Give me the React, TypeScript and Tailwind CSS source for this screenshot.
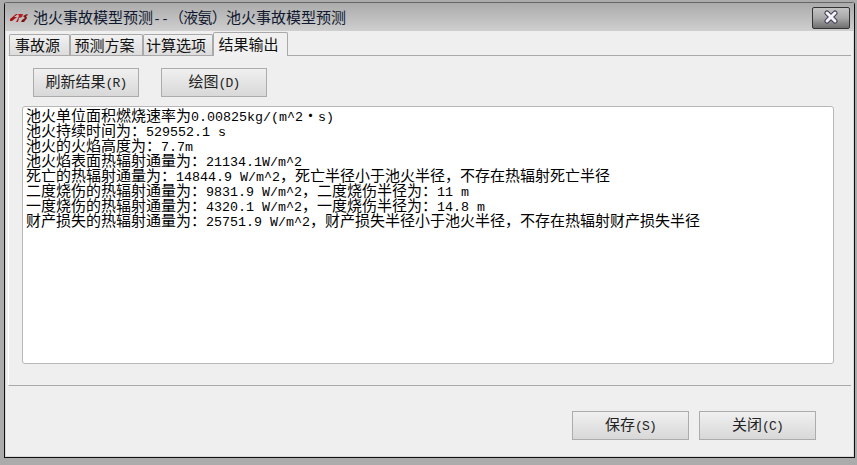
const CJK = '"Noto Sans CJK SC", "Liberation Sans", sans-serif';

const lines = [
  "池火单位面积燃烧速率为0.00825kg/(m^2·s)",
  "池火持续时间为：529552.1 s",
  "池火的火焰高度为：7.7m",
  "池火焰表面热辐射通量为：21134.1W/m^2",
  "死亡的热辐射通量为：14844.9 W/m^2，死亡半径小于池火半径，不存在热辐射死亡半径",
  "二度烧伤的热辐射通量为：9831.9 W/m^2，二度烧伤半径为：11 m",
  "一度烧伤的热辐射通量为：4320.1 W/m^2，一度烧伤半径为：14.8 m",
  "财产损失的热辐射通量为：25751.9 W/m^2，财产损失半径小于池火半径，不存在热辐射财产损失半径",
];

const tabs = [
  { label: "事故源", width: "w-[61px]" },
  { label: "预测方案", width: "w-[73px]" },
  { label: "计算选项", width: "w-[70px]" },
];

// ascii runs are half width like the bitmap font in the picture
function Mixed({ text, latin = "text-[13.33px]" }: { text: string; latin?: string }) {
  const parts = text.split(/([\x20-\x7e]+)/);
  return (
    <span>
      {parts.map((p, i) =>
        /^[\x20-\x7e]+$/.test(p) ? (
          <span key={i} className={`font-['Liberation_Mono',monospace] whitespace-pre ${latin}`}>
            {p}
          </span>
        ) : (
          <span key={i}>{p}</span>
        ),
      )}
    </span>
  );
}

function Btn({ label, className }: { label: string; className: string }) {
  return (
    <button
      className={`flex items-center justify-center border border-[#acacac] bg-gradient-to-b from-[#f0f0f0] to-[#d8d8d8] pb-[2px] text-[15px] text-[#222] ${className}`}
    >
      <Mixed text={label} latin="text-[13px] tracking-[-0.8px]" />
    </button>
  );
}

export default function App() {
  return (
    <div className="h-[465px] w-[857px] overflow-hidden bg-[#ababab] pt-[2px] pl-[4px]" style={{ fontFamily: CJK }}>
      <div className="flex h-[456px] w-[851px] flex-col rounded-t-[3px] border border-[#111] border-t-[#666] bg-[#efefef] leading-none shadow-[inset_0_0_0_1px_#d8d8d8]">
        {/* title bar */}
        <div className="flex h-[28px] shrink-0 items-center bg-gradient-to-b from-[#ababab] to-[#cfcfcf] pr-[4px] pl-[4px]">
          <svg width="19" height="10" viewBox="0 0 19 10" className="mt-[2px] mr-[5px] shrink-0">
            <path d="M1 6 L7 1 L9 1 L5 4 L8 4 L3 8 L1 8 Z" fill="#a81414" />
            <path d="M7 9 L10 3 L9 1 L14 1 L13 4 L10 5 L9 9 Z" fill="#b81c1c" />
            <path d="M13 7 L16 5 L14 3 L18 1 L19 2 L17 3 L18 5 L15 9 L12 9 Z" fill="#7e1010" />
          </svg>
          <span className="pt-[1px] text-[15px] whitespace-nowrap text-[#101830]">
            池火事故模型预测<span className="font-['Liberation_Mono',monospace] text-[13.33px]">--</span>
            <span className="tracking-[-0.75px]">（液氨）</span>池火事故模型预测
          </span>
          <div className="mt-[1px] ml-auto flex h-[22px] w-[38px] items-center justify-center rounded-[2px] border border-[#333] bg-gradient-to-b from-[#c4c4c4] via-[#a8a8a8] to-[#6f6f6f]">
            <svg width="16" height="14" viewBox="0 0 16 14" className="-mt-[2px]">
              <path d="M4 3 L12 11 M12 3 L4 11" stroke="#3f3f55" strokeWidth="5" strokeLinecap="round" fill="none" />
              <path d="M4 3 L12 11 M12 3 L4 11" stroke="#f4f4f8" strokeWidth="3" strokeLinecap="round" fill="none" />
            </svg>
          </div>
        </div>

        {/* tab strip */}
        <div className="flex h-[24px] shrink-0 items-end pl-[4px] text-[15px] text-[#111]">
          {tabs.map((t) => (
            <div
              key={t.label}
              className={`flex h-[21px] items-center justify-center rounded-t-[2px] border border-b-0 border-[#a9a9a9] bg-gradient-to-b from-[#f2f2f2] to-[#dcdcdc] pr-[4px] pb-[2px] ${t.width}`}
            >
              {t.label}
            </div>
          ))}
          <div className="relative z-10 -mb-px flex h-[24px] w-[75px] items-center justify-center rounded-t-[2px] border border-b-0 border-[#a9a9a9] bg-[#f0f0f0] pr-[4px] pb-[3px]">
            结果输出
          </div>
        </div>

        {/* tab page */}
        <div className="mx-[3px] flex h-[331px] shrink-0 flex-col border-t border-b border-l border-t-[#a9a9a9] border-b-[#a9a9a9] border-l-[#fff] bg-[#efefef] pt-[12px] pr-[16px] pl-[13px]">
          <div className="ml-[11px] flex gap-[22px]">
            <Btn label="刷新结果(R)" className="h-[29px] w-[106px]" />
            <Btn label="绘图(D)" className="h-[29px] w-[106px]" />
          </div>
          <div className="mt-[9px] h-[258px] w-[812px] rounded-[3px] border border-[#b8b8b8] bg-white pt-[1px] pl-[3px] text-[15px] text-black">
            {lines.map((l) => (
              <div key={l} className="h-[15px] leading-[13px] whitespace-nowrap">
                <Mixed text={l} />
              </div>
            ))}
          </div>
        </div>

        {/* bottom buttons */}
        <div className="mt-[25px] flex justify-end gap-[10px] pr-[38px]">
          <Btn label="保存(S)" className="h-[29px] w-[117px]" />
          <Btn label="关闭(C)" className="h-[29px] w-[117px]" />
        </div>
      </div>
    </div>
  );
}
